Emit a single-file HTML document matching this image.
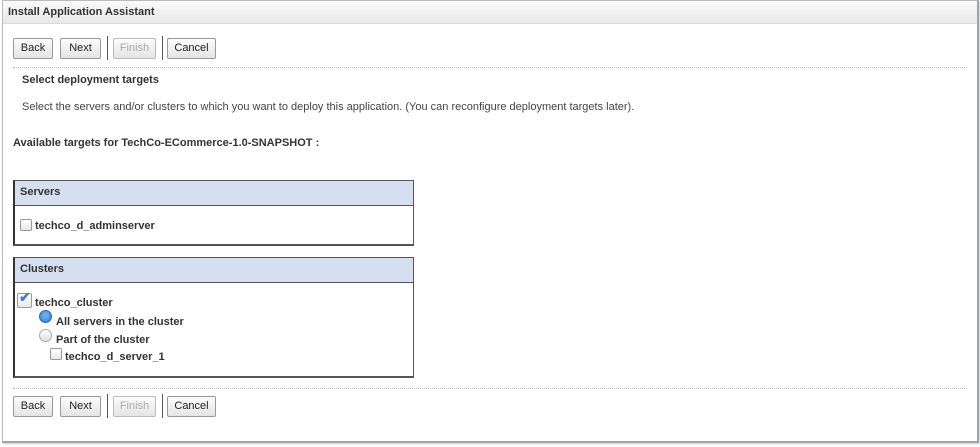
<!DOCTYPE html><html><head><style>
body{margin:0;width:980px;height:447px;background:#fff;font-family:"Liberation Sans",sans-serif;font-size:11px;color:#333;position:relative;overflow:hidden}
.a{position:absolute}
.frame{left:2px;top:0;width:974px;height:440px;border:1px solid #b8bcbc;border-right:2px solid #a0a4a4;border-bottom:2px solid #a0a4a4;box-shadow:1px 1px 2px #ccc}
.title{left:3px;top:1px;width:974px;height:22px;background:linear-gradient(#fafafa,#e8e8e8);border-bottom:1px solid #ddd;font-weight:bold;font-size:11px;line-height:22px;text-indent:5px;color:#333}
.btn{height:19px;border:1px solid #999;border-radius:2px;background:linear-gradient(#fcfcfc,#e4e4e4);font-size:11px;line-height:19px;text-align:center;color:#222}
.dis{color:#aaa;border-color:#bbb}
.sep{width:1px;height:24px;background:#555}
.dot{height:0;border-top:1px dotted #bbb}
.box{border:1px solid #555;border-left:2px solid #333;border-bottom:2px solid #555}
.hd{background:#d5dff0;border-bottom:1px solid #555;height:24px;line-height:22px;font-weight:bold;padding-left:5px;color:#333}
.cb{width:10px;height:10px;border:1px solid #999;border-radius:2px;background:linear-gradient(#fff,#e8e8e8)}
.rd{width:11px;height:11px;border:1px solid #aaa;border-radius:50%;background:linear-gradient(#fff,#ddd)}
b{font-weight:bold}
</style></head><body>
<div class="a frame"></div>
<div class="a title">Install Application Assistant</div>
<div class="a btn" style="left:13px;top:38px;width:38px">Back</div>
<div class="a btn" style="left:60px;top:38px;width:39px">Next</div>
<div class="a sep" style="left:107px;top:36px"></div>
<div class="a btn dis" style="left:113px;top:38px;width:41px">Finish</div>
<div class="a sep" style="left:162px;top:36px"></div>
<div class="a btn" style="left:167px;top:38px;width:47px">Cancel</div>
<div class="a dot" style="left:13px;top:67px;width:954px"></div>
<div class="a" style="left:22px;top:74px;font-weight:bold">Select deployment targets</div>
<div class="a" style="left:22px;top:101px;color:#444">Select the servers and/or clusters to which you want to deploy this application. (You can reconfigure deployment targets later).</div>
<div class="a" style="left:13px;top:137px;font-weight:bold">Available targets for TechCo-ECommerce-1.0-SNAPSHOT :</div>
<div class="a box" style="left:13px;top:180px;width:398px;height:63px"><div class="hd">Servers</div></div>
<div class="a cb" style="left:20px;top:219px"></div>
<div class="a" style="left:35px;top:220px;font-weight:bold">techco_d_adminserver</div>
<div class="a box" style="left:13px;top:257px;width:398px;height:118px"><div class="hd">Clusters</div></div>
<div class="a cb" style="left:17px;top:293px;width:13px;height:13px"></div>
<div class="a" style="left:19px;top:289px;color:#3a7fd0;font-size:14px;font-weight:bold">✔</div>
<div class="a" style="left:35px;top:297px;font-weight:bold">techco_cluster</div>
<div class="a rd" style="left:39px;top:310px;background:radial-gradient(circle at 50% 40%,#7ab8f5,#2a76d2);border-color:#2a6ab8"></div>
<div class="a" style="left:56px;top:316px;font-weight:bold">All servers in the cluster</div>
<div class="a rd" style="left:39px;top:329px"></div>
<div class="a" style="left:56px;top:334px;font-weight:bold">Part of the cluster</div>
<div class="a cb" style="left:50px;top:348px"></div>
<div class="a" style="left:65px;top:351px;font-weight:bold">techco_d_server_1</div>
<div class="a dot" style="left:13px;top:388px;width:954px"></div>
<div class="a btn" style="left:13px;top:396px;width:38px">Back</div>
<div class="a btn" style="left:60px;top:396px;width:39px">Next</div>
<div class="a sep" style="left:107px;top:394px"></div>
<div class="a btn dis" style="left:113px;top:396px;width:41px">Finish</div>
<div class="a sep" style="left:162px;top:394px"></div>
<div class="a btn" style="left:167px;top:396px;width:47px">Cancel</div>
</body></html>
